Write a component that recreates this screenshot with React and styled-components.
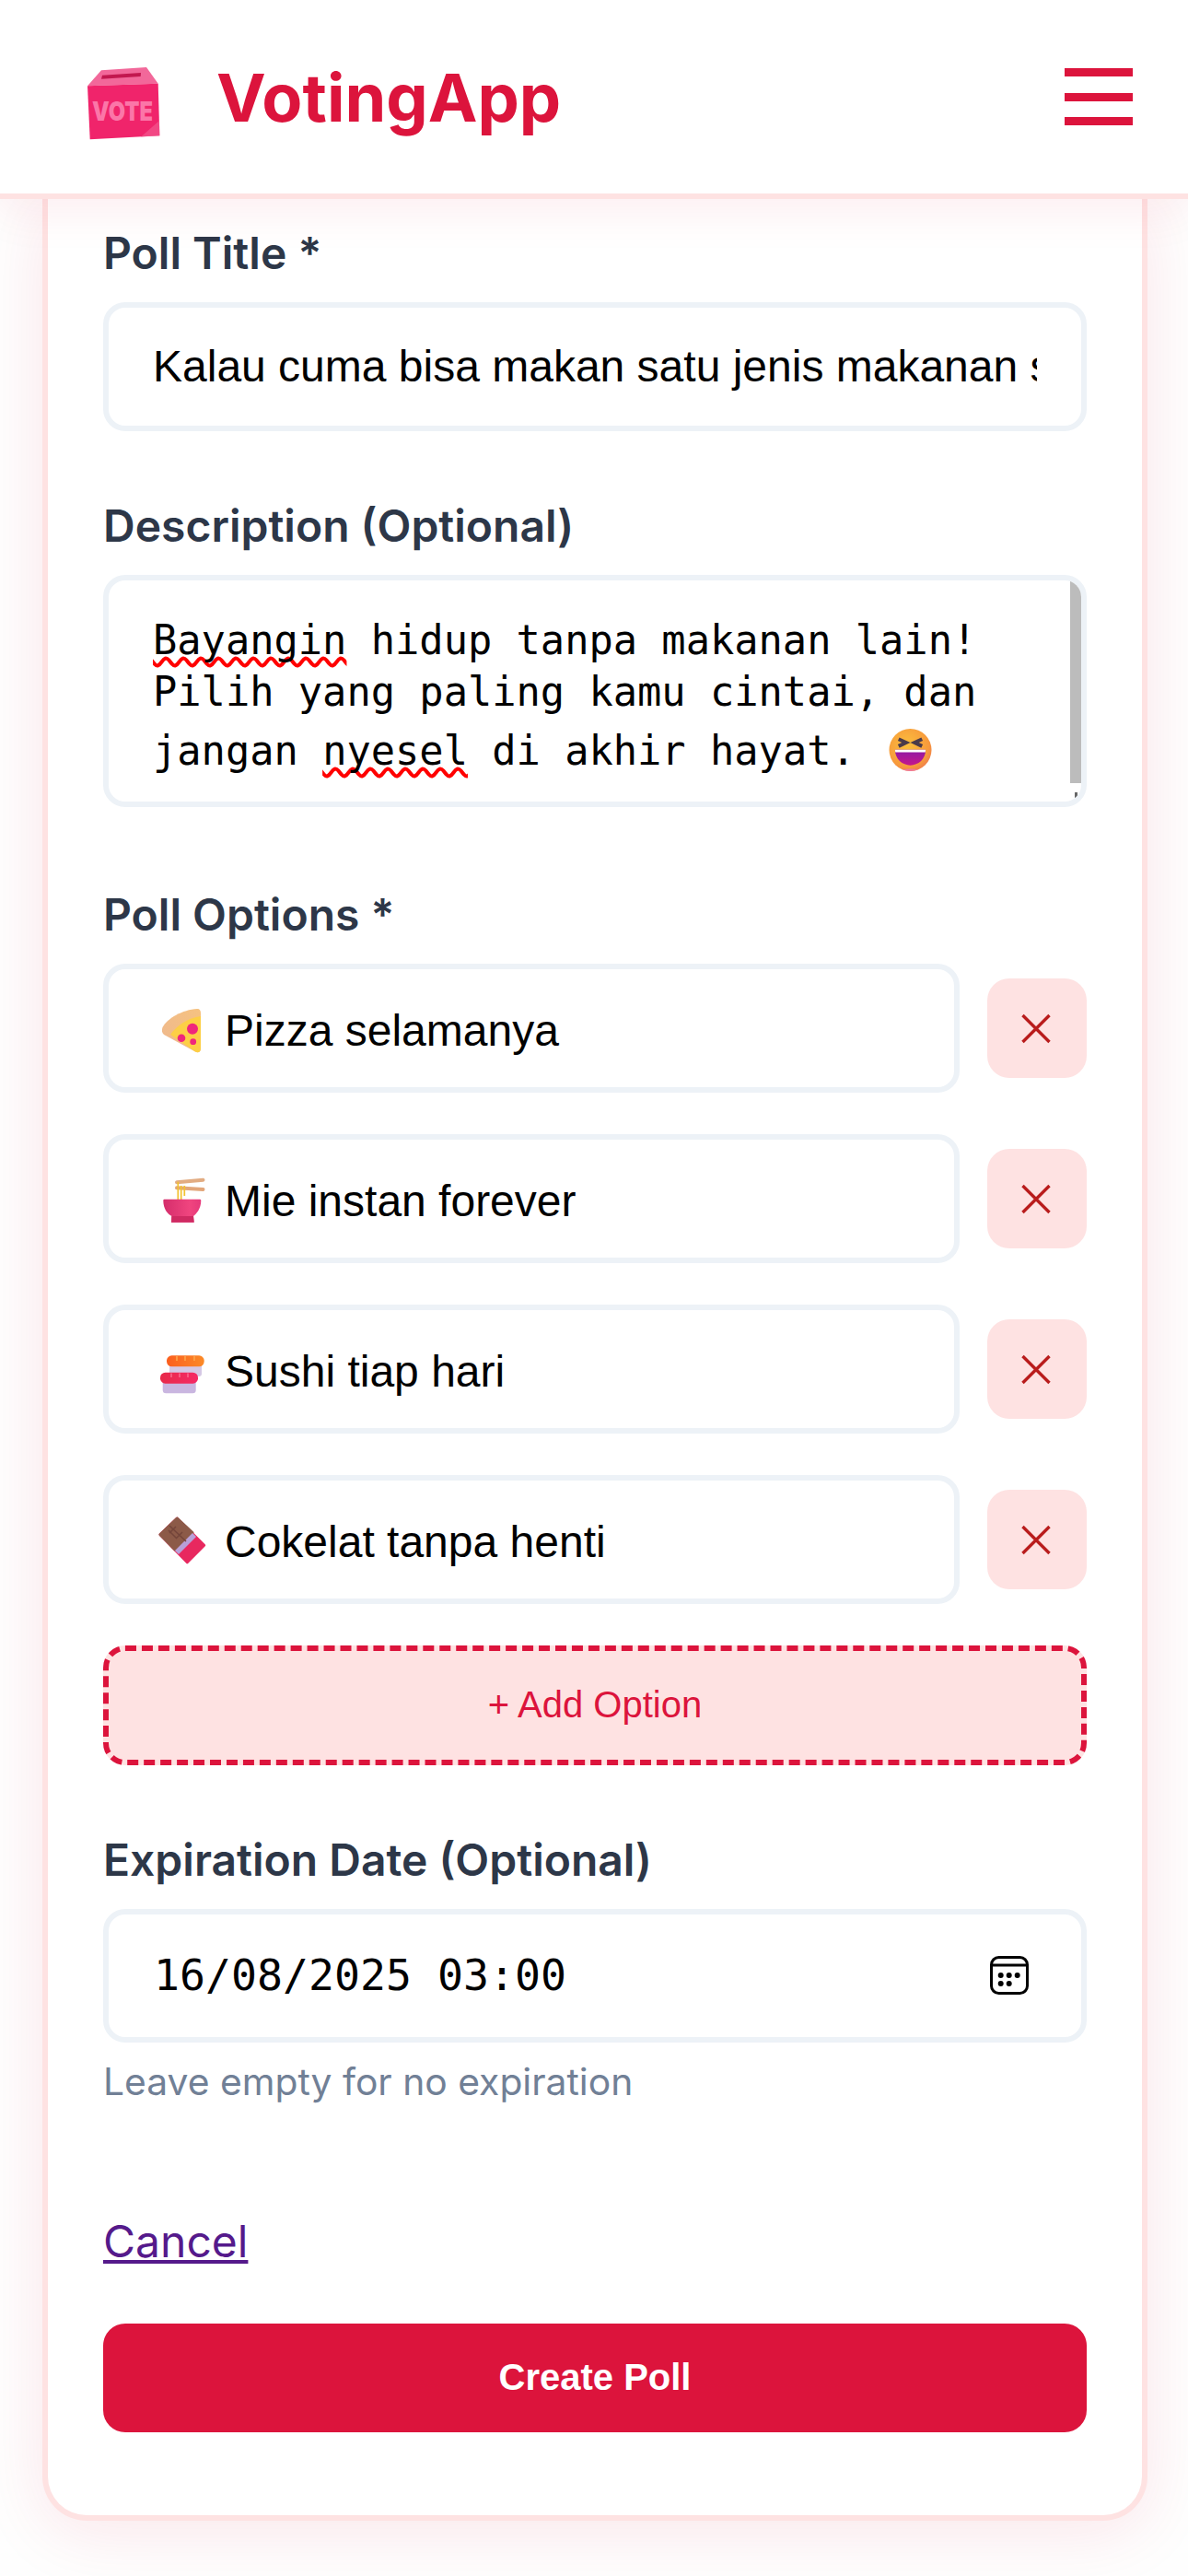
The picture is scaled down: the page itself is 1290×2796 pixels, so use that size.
import React from "react";
import styled, { createGlobalStyle } from "styled-components";

const GlobalStyle = createGlobalStyle`
  html, body {
    margin: 0;
    padding: 0;
    background: #fefefe;
  }
  * {
    box-sizing: border-box;
  }
`;

const options = [
  { id: "pizza", text: "Pizza selamanya", Icon: PizzaIcon },
  { id: "mie", text: "Mie instan forever", Icon: NoodleIcon },
  { id: "sushi", text: "Sushi tiap hari", Icon: SushiIcon },
  { id: "cokelat", text: "Cokelat tanpa henti", Icon: ChocolateIcon }
];

export default function App() {
  return (
    <Page>
      <GlobalStyle />
      <Header>
        <Brand>
          <VoteIcon />
          <BrandName>VotingApp</BrandName>
        </Brand>
        <MenuButton aria-label="Menu">
          <MenuLine />
          <MenuLine />
          <MenuLine />
        </MenuButton>
      </Header>

      <Card>
        <Label>Poll Title *</Label>
        <Field>
          <FieldText>
            Kalau cuma bisa makan satu jenis makanan seumur hidup, pilih apa?
          </FieldText>
        </Field>

        <SectionLabel $gap="74px">Description (Optional)</SectionLabel>
        <TextArea>
          <TextLine>
            <Misspelled>Bayangin</Misspelled> hidup tanpa makanan lain!
          </TextLine>
          <TextLine>Pilih yang paling kamu cintai, dan</TextLine>
          <TextLine $tall>
            jangan <Misspelled>nyesel</Misspelled> di akhir hayat. <LaughIcon />
          </TextLine>
          <ScrollThumb />
          <ScrollDot />
        </TextArea>

        <SectionLabel $gap="88px">Poll Options *</SectionLabel>
        <OptionList>
          {options.map(({ id, text, Icon }) => (
            <OptionRow key={id}>
              <OptionField>
                <Icon />
                <OptionText>{text}</OptionText>
              </OptionField>
              <RemoveButton aria-label={"Remove " + text}>
                <svg width="36" height="36" viewBox="0 0 36 36" fill="none">
                  <path
                    d="M2.5 4 L31.5 33 M31.5 4 L2.5 33"
                    stroke="#b91c1c"
                    strokeWidth="3.4"
                  />
                </svg>
              </RemoveButton>
            </OptionRow>
          ))}
        </OptionList>
        <AddOption>+ Add Option</AddOption>

        <SectionLabel $gap="74px">Expiration Date (Optional)</SectionLabel>
        <DateField>
          <DateText>16/08/2025 03:00</DateText>
          <svg width="42" height="42" viewBox="0 0 42 42" fill="none">
            <rect
              x="1.5"
              y="1.5"
              width="39"
              height="39"
              rx="8"
              stroke="#000"
              strokeWidth="3"
            />
            <path d="M2 10 H40" stroke="#000" strokeWidth="3" />
            <circle cx="11.7" cy="21" r="3" fill="#000" />
            <circle cx="20.7" cy="21" r="3" fill="#000" />
            <circle cx="29.7" cy="21" r="3" fill="#000" />
            <circle cx="11.7" cy="30" r="3" fill="#000" />
            <circle cx="20.7" cy="30" r="3" fill="#000" />
          </svg>
        </DateField>
        <Hint>Leave empty for no expiration</Hint>

        <CancelLink href="#cancel">Cancel</CancelLink>
        <SubmitButton>Create Poll</SubmitButton>
      </Card>
    </Page>
  );
}

function VoteIcon() {
  return (
    <BrandIcon viewBox="0 0 80 80" width="80" height="80">
      <path d="M15 3.3 L64 0 L76.7 17.7 L0 20.3 Z" fill="#f2689a" />
      <path d="M16 8.7 L58 6 L57.7 10 L15 12.7 Z" fill="#c2184f" />
      <path d="M0 20.3 L76.7 17.7 L78.3 74.3 L2.7 78.3 Z" fill="#f0246b" />
      <path d="M58 75.4 L78 58 L78.3 74.3 Z" fill="#f2588f" opacity="0.7" />
      <VoteLabel x="5" y="57.5" textLength="66" lengthAdjust="spacingAndGlyphs">
        VOTE
      </VoteLabel>
    </BrandIcon>
  );
}

function PizzaIcon() {
  return (
    <OptionIcon viewBox="0 0 62 62">
      <defs>
        <linearGradient id="crust" x1="0" y1="1" x2="1" y2="0">
          <stop offset="0" stopColor="#eeb88f" />
          <stop offset="1" stopColor="#f6c280" />
        </linearGradient>
      </defs>
      <path
        d="M10.5 30 C16 20 32 11 48 10 C51 10 52 12 52 15 V53 C52 57 49 58 46 56.5 L12 38 C9.5 36 9.5 33 10.5 30 Z"
        fill="url(#crust)"
      />
      <path
        d="M19 38 C26 28 38 20 52 18 V53 C52 57 49 58 46 56.5 Z"
        fill="#fdcf45"
      />
      <circle cx="43" cy="31.7" r="6" fill="#f0267c" />
      <circle cx="31" cy="41.7" r="4.3" fill="#f0267c" />
      <circle cx="43.7" cy="45.7" r="3.4" fill="#f0267c" />
    </OptionIcon>
  );
}

function NoodleIcon() {
  return (
    <OptionIcon viewBox="0 0 62 62">
      <defs>
        <linearGradient id="bowl" x1="0" y1="0" x2="1" y2="0">
          <stop offset="0" stopColor="#d42d6b" />
          <stop offset="0.7" stopColor="#f0457f" />
          <stop offset="1" stopColor="#e6397a" />
        </linearGradient>
      </defs>
      <path d="M26 13.3 L54.5 10.7" stroke="#e2ac82" strokeWidth="4" strokeLinecap="round" />
      <path d="M26 19.3 L54.5 21" stroke="#e2a67a" strokeWidth="4" strokeLinecap="round" />
      <path d="M27.3 12.7 V32 M30.7 17 V32 M34.3 17 V28" stroke="#f2c230" strokeWidth="1.7" />
      <path
        d="M11.3 33 Q11.3 31.7 12.5 31.7 H51 Q52.3 31.7 52.3 33 C52.3 42 47 48 44 50 L44.7 56.7 H20 L20.5 50 C16 48 11.3 42 11.3 33 Z"
        fill="url(#bowl)"
      />
      <path d="M20.4 50 H44 L44.7 56.7 H20 Z" fill="#cf2a62" />
    </OptionIcon>
  );
}

function SushiIcon() {
  return (
    <OptionIcon viewBox="0 0 62 62">
      <defs>
        <linearGradient id="topFish" x1="0" y1="0" x2="1" y2="0">
          <stop offset="0" stopColor="#fb5e1e" />
          <stop offset="1" stopColor="#fb8a28" />
        </linearGradient>
        <linearGradient id="lowFish" x1="0" y1="0" x2="1" y2="0">
          <stop offset="0" stopColor="#e82a4a" />
          <stop offset="1" stopColor="#f52a66" />
        </linearGradient>
      </defs>
      <rect x="18" y="24" width="35" height="15" rx="3" fill="#d5c8e4" />
      <rect x="15" y="16.3" width="40.7" height="12" rx="5.5" fill="url(#topFish)" />
      <path d="M26 17 V22 M35 17 V22 M45 17 V22" stroke="#fca64a" strokeWidth="1.6" />
      <rect x="10.7" y="42" width="36" height="15.3" rx="3.5" fill="#c9b6e0" />
      <rect x="8" y="34.7" width="41" height="12" rx="5.5" fill="url(#lowFish)" />
      <path d="M20 35.5 V40 M29 35.5 V40 M38 35.5 V40" stroke="#f9688a" strokeWidth="1.6" />
    </OptionIcon>
  );
}

function ChocolateIcon() {
  return (
    <OptionIcon viewBox="0 0 62 62">
      <path
        d="M26.3 8 L8 25.7 L37.3 55.7 L55.7 37.3 Z"
        fill="#e8285f"
        stroke="#e8285f"
        strokeWidth="3"
        strokeLinejoin="round"
      />
      <path
        d="M26.3 8 L8 25.7 L24 42 L43 23.5 Z"
        fill="#8c5a48"
        stroke="#8c5a48"
        strokeWidth="3"
        strokeLinejoin="round"
      />
      <path d="M24 43 L43 24 L47 28 L28 47 Z" fill="#b8a0d8" />
      <path d="M18 16 L36 33 M26 30 L17 21 M25 17 L18 24 M32 23 L25 30" stroke="#74453a" strokeWidth="1.6" />
    </OptionIcon>
  );
}

function LaughIcon() {
  return (
    <EmojiImage viewBox="0 0 48 48">
      <defs>
        <radialGradient id="face" cx="0.42" cy="0.38" r="0.68">
          <stop offset="0" stopColor="#fbbf3c" />
          <stop offset="0.75" stopColor="#f79a3c" />
          <stop offset="1" stopColor="#ee7a4e" />
        </radialGradient>
        <linearGradient id="mouth" x1="0" y1="0" x2="0" y2="1">
          <stop offset="0" stopColor="#8e1aa6" />
          <stop offset="1" stopColor="#c4168c" />
        </linearGradient>
      </defs>
      <circle cx="24" cy="24" r="23.5" fill="url(#face)" />
      <path d="M11 12 L19.3 15.8 L11 19.8 M37 12 L28.7 15.8 L37 19.8" fill="none" stroke="#4a3a4a" strokeWidth="4" />
      <path d="M7 23.8 H41 C41 34 33 41 24 41 C15 41 7 34 7 23.8 Z" fill="url(#mouth)" />
      <path d="M7 23.8 H41 L40.6 26.6 H7.4 Z" fill="#fff" />
      <path d="M15 46 Q24 49 33 46 Q24 44 15 46 Z" fill="#f07a9a" />
    </EmojiImage>
  );
}

const Page = styled.div`
  width: 1290px;
  min-height: 2796px;
  background: #fefefe;
  font-family: "Liberation Sans", Arial, sans-serif;
  color: #000;
`;

const Header = styled.header`
  position: relative;
  z-index: 2;
  height: 216px;
  padding: 0 60px 0 95px;
  display: flex;
  align-items: center;
  justify-content: space-between;
  background: #fff;
  border-bottom: 6px solid #fee2e2;
  box-shadow: 0 12px 48px rgba(220, 20, 60, 0.08);
`;

const Brand = styled.div`
  display: flex;
  align-items: center;
`;

const BrandIcon = styled.svg`
  flex: none;
  margin-top: 16px;
  overflow: visible;
`;

const VoteLabel = styled.text`
  font-family: Inter, sans-serif;
  font-size: 29px;
  font-weight: 900;
  fill: #fb76a8;
`;

const BrandName = styled.span`
  margin-left: 60px;
  font-family: Inter, sans-serif;
  font-size: 72px;
  font-weight: 700;
  color: #dc143c;
`;

const MenuButton = styled.div`
  display: flex;
  flex-direction: column;
  justify-content: space-between;
  width: 74px;
  height: 62px;
`;

const MenuLine = styled.span`
  display: block;
  height: 9px;
  background: #dc143c;
`;

const Card = styled.main`
  width: 1200px;
  height: 2520px;
  margin-left: 46px;
  padding: 30px 60px 0;
  background: #fff;
  border: 6px solid #fee2e2;
  border-top: 0;
  border-radius: 0 0 48px 48px;
  box-shadow: 0 12px 72px rgba(220, 20, 60, 0.1);
`;

const Label = styled.div`
  font-family: Inter, sans-serif;
  font-size: 48px;
  font-weight: 600;
  line-height: 58px;
  color: #2d3748;
`;

const SectionLabel = styled(Label)`
  margin-top: ${(p) => p.$gap};
`;

const fieldBorder = "6px solid #edf2f7";

const Field = styled.div`
  height: 140px;
  margin-top: 24px;
  padding: 0 48px;
  display: flex;
  align-items: center;
  background: #fff;
  border: ${fieldBorder};
  border-radius: 24px;
`;

const FieldText = styled.div`
  width: 100%;
  padding-bottom: 2px;
  overflow: hidden;
  white-space: nowrap;
  font-size: 48px;
`;

const TextArea = styled.div`
  position: relative;
  height: 252px;
  margin-top: 24px;
  padding: 37px 48px 0;
  background: #fff;
  border: ${fieldBorder};
  border-radius: 24px;
  font-family: "DejaVu Sans Mono", monospace;
  font-size: 43.7px;
  line-height: 56px;
  white-space: nowrap;
  overflow: hidden;
`;

const TextLine = styled.div`
  margin-top: ${(p) => (p.$tall ? "8px" : "0")};
`;

const Misspelled = styled.span`
  text-decoration: underline wavy #f00 4px;
  text-decoration-skip-ink: none;
  text-underline-offset: 3px;
`;

const EmojiImage = styled.svg`
  width: 47px;
  height: 48px;
  margin-left: 10px;
  vertical-align: -8px;
`;

const ScrollThumb = styled.div`
  position: absolute;
  top: 0;
  right: 0;
  width: 12px;
  height: 220px;
  background: #bcbcbc;
`;

const ScrollDot = styled.div`
  position: absolute;
  right: 4px;
  bottom: 4px;
  width: 3px;
  height: 6px;
  background: #666;
`;

const OptionList = styled.div`
  margin-top: 24px;
  display: flex;
  flex-direction: column;
  gap: 45px;
`;

const OptionRow = styled.div`
  display: flex;
  align-items: center;
  gap: 30px;
`;

const OptionField = styled.div`
  flex: 1;
  height: 140px;
  padding: 0 48px;
  display: flex;
  align-items: center;
  background: #fff;
  border: ${fieldBorder};
  border-radius: 24px;
`;

const OptionIcon = styled.svg`
  flex: none;
  width: 62px;
  height: 62px;
  margin-right: 16px;
`;

const OptionText = styled.span`
  margin-top: 5px;
  font-size: 48px;
  white-space: nowrap;
`;

const RemoveButton = styled.button`
  flex: none;
  width: 108px;
  height: 108px;
  padding: 0;
  display: flex;
  align-items: center;
  justify-content: center;
  background: #fee2e2;
  border: 0;
  border-radius: 24px;
`;

const AddOption = styled.div`
  height: 129.5px;
  margin-top: 45px;
  display: flex;
  align-items: center;
  justify-content: center;
  background: #fee2e2;
  border: 6px dashed #dc143c;
  border-radius: 24px;
  font-size: 40px;
  color: #dc143c;
`;

const DateField = styled(Field)`
  height: 145px;
  padding: 0 57px 0 49px;
  justify-content: space-between;
`;

const DateText = styled.span`
  font-family: "DejaVu Sans Mono", monospace;
  font-size: 46.5px;
`;

const Hint = styled.div`
  margin-top: 17px;
  font-family: Inter, sans-serif;
  font-size: 40.8px;
  line-height: 50px;
  color: #718096;
`;

const CancelLink = styled.a`
  display: block;
  width: fit-content;
  margin-top: 120px;
  font-family: Inter, sans-serif;
  font-size: 48px;
  line-height: 58px;
  color: #551a8b;
`;

const SubmitButton = styled.button`
  display: block;
  width: 100%;
  height: 118px;
  margin-top: 60px;
  background: #dc143c;
  border: 0;
  border-radius: 24px;
  font-family: "Liberation Sans", Arial, sans-serif;
  font-size: 40px;
  font-weight: 700;
  color: #fff;
`;
